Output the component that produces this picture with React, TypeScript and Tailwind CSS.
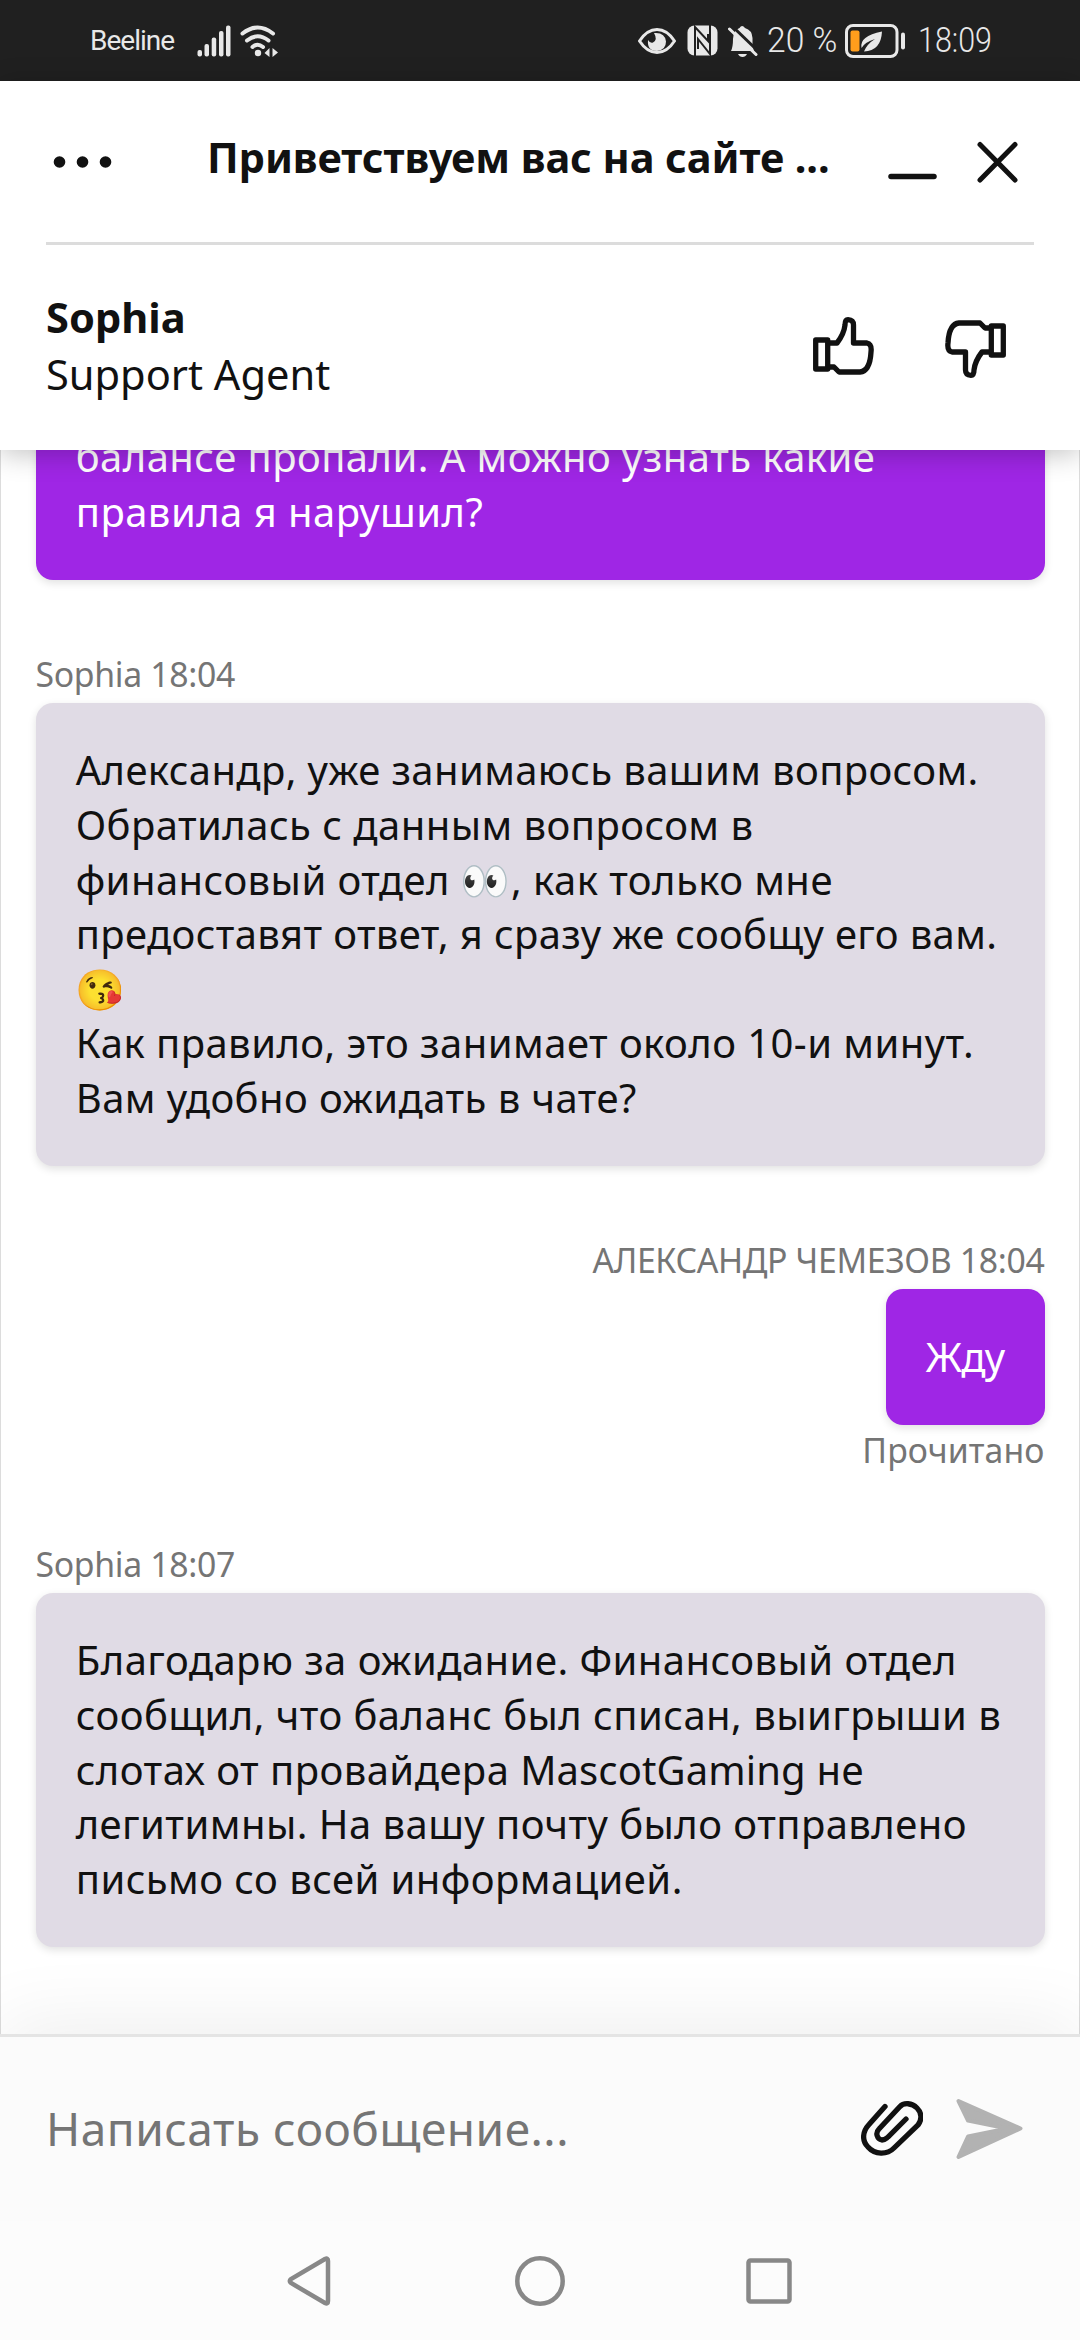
import type { ReactNode } from "react";
import clsx from "clsx";

const StatusBar = () => {
  return (
    <div className="flex h-[81px] items-center justify-between bg-[#202020] pr-[88px] pl-[90px] font-['Roboto'] font-light text-[#e8e8e8]">
      <div className="flex items-center gap-2">
        <span className="w-[99px] text-[28px] leading-[36px] font-normal tracking-[-1px] whitespace-nowrap">
          Beeline
        </span>
        <SignalIcon />
        <WifiIcon />
      </div>
      <div className="flex items-center">
        <EyeIcon />
        <NfcIcon />
        <BellOffIcon />
        <span className="w-[78px] origin-left scale-x-[0.96] text-[35px] leading-[40px] whitespace-nowrap">
          20 %
        </span>
        <BatteryIcon />
        <span className="w-[74px] origin-left scale-x-[0.87] text-[35px] leading-[40px] whitespace-nowrap">
          18:09
        </span>
      </div>
    </div>
  );
};

const ChatHeader = () => {
  return (
    <header className="relative z-10 h-[369px] bg-white px-[46px] text-[41.6px] text-[#111] shadow-[0_4px_26px_rgba(0,0,0,0.24)]">
      <div className="flex h-[164px] items-center border-b-[3px] border-[#dcdcdc]">
        <DotsIcon />
        <h1 className="mb-[9px] ml-[91px] w-[674px] shrink-0 leading-[57px] font-bold tracking-[-0.1px] whitespace-nowrap">
          Приветствуем вас на сайте ...
        </h1>
        <MinimizeIcon />
        <CloseIcon />
      </div>
      <div className="flex h-[205px] items-center justify-between pr-[28px]">
        <div className="mb-[3px] leading-[57px]">
          <p className="font-bold">Sophia</p>
          <p>Support Agent</p>
        </div>
        <div className="mb-[3px] flex items-center gap-[71px]">
          <ThumbIcon />
          <ThumbIcon className="mt-[5px] rotate-180" />
        </div>
      </div>
    </header>
  );
};

const Message = ({
  own,
  label,
  status,
  children,
}: {
  own?: boolean;
  label?: string;
  status?: string;
  children: ReactNode;
}) => {
  return (
    <div
      className={clsx(
        "flex flex-col text-[33.8px] leading-[46px] text-[#757575]",
        own ? "items-end" : "items-start",
      )}
    >
      {label && <p className="mb-[6px] tracking-[-0.34px]">{label}</p>}
      <div
        className={clsx(
          "rounded-[17px] px-[40.2px] py-[40.6px] text-[40px] leading-[54.6px] shadow-[0_3px_8px_rgba(0,0,0,0.12)]",
          own ? "bg-[#9f26e5] text-white" : "w-full bg-[#e0dbe5] text-[#111]",
        )}
      >
        {children}
      </div>
      {status && <p className="mt-[2px] tracking-[0.1px]">{status}</p>}
    </div>
  );
};

const MessageList = () => {
  return (
    <main className="flex h-[1584px] flex-col justify-end overflow-hidden border-x border-[#dcdcdc] px-[34.5px] pb-[87px]">
      <Message own>
        <p className="w-[928.6px] tracking-[0.45px]">
          балансе пропали. А можно узнать какие
          <br />
          правила я нарушил?
        </p>
      </Message>
      <div className="h-[71px] shrink-0" />
      <Message label="Sophia 18:04">
        <p className="tracking-[0.45px] whitespace-nowrap">
          <span className="tracking-[0.38px]">
            Александр, уже занимаюсь вашим вопросом.
          </span>
          <br />
          Обратилась с данным вопросом в
          <br />
          финансовый отдел 👀, как только мне
          <br />
          <span className="tracking-[0.34px]">
            предоставят ответ, я сразу же сообщу его вам.
          </span>
          <br />
          😘
          <br />
          Как правило, это занимает около 10-и минут.
          <br />
          Вам удобно ожидать в чате?
        </p>
      </Message>
      <div className="h-[71px] shrink-0" />
      <Message own label="АЛЕКСАНДР ЧЕМЕЗОВ 18:04" status="Прочитано">
        <p className="tracking-[-0.8px]">Жду</p>
      </Message>
      <div className="h-[68px] shrink-0" />
      <Message label="Sophia 18:07">
        <p className="tracking-[0.45px] whitespace-nowrap">
          Благодарю за ожидание. Финансовый отдел
          <br />
          сообщил, что баланс был списан, выигрыши в
          <br />
          слотах от провайдера <span className="tracking-[0.1px]">MascotGaming</span> не
          <br />
          легитимны. На вашу почту было отправлено
          <br />
          письмо со всей информацией.
        </p>
      </Message>
    </main>
  );
};

const Composer = () => {
  return (
    <div className="relative h-[187px] border-t-[3px] border-[#e4e4e4] bg-[#fbfbfb] shadow-[0_-10px_78px_rgba(0,0,0,0.07)]">
      <div className="flex h-[184px] items-center pr-[57px] pl-[46px]">
        <span className="mb-[3px] flex-1 text-[46px] leading-[64px] tracking-[0.5px] text-[#757575]">
          Написать сообщение...
        </span>
        <ClipIcon />
        <SendIcon />
      </div>
    </div>
  );
};

const NavBar = () => {
  return (
    <nav className="relative flex h-[119px] items-center bg-[#fcfcfc] pl-[287px] text-[#888]">
      <svg width="44" height="50" fill="none" stroke="currentColor" strokeWidth="4.5">
        <path d="M38 3 L4 23 Q1.500 25 4 27 L38 47 Q41 48.500 41 45 V5 Q41 1.500 38 3Z" />
      </svg>
      <svg width="50" height="50" fill="none" stroke="currentColor" strokeWidth="4.5" className="ml-[184px]">
        <circle cx="25" cy="25" r="22.700" />
      </svg>
      <svg width="46" height="46" fill="none" stroke="currentColor" strokeWidth="4.5" className="ml-[181px]">
        <rect x="2.500" y="2.500" width="41" height="41" rx="2" />
      </svg>
    </nav>
  );
};

const App = () => {
  return (
    <div className="h-[2340px] w-[1080px] overflow-hidden bg-white font-['Noto_Sans','Noto_Color_Emoji',sans-serif]">
      <StatusBar />
      <ChatHeader />
      <MessageList />
      <Composer />
      <NavBar />
    </div>
  );
};

export default App;

const SignalIcon = () => {
  return (
    <svg width="35" height="32" fill="currentColor">
      <rect x="0.500" y="25" width="4.500" height="6.500" rx="2" />
      <rect x="7.500" y="19" width="4.500" height="12.500" rx="2" />
      <rect x="14.700" y="12.500" width="4.500" height="19" rx="2" />
      <rect x="22" y="6" width="4.500" height="25.500" rx="2" />
      <rect x="29" y="0.500" width="4.500" height="31" rx="2" />
    </svg>
  );
};

const WifiIcon = () => {
  return (
    <svg width="40" height="32" fill="currentColor">
      <g fill="none" stroke="currentColor" strokeWidth="4" strokeLinecap="round">
        <path d="M2.500 8.500 Q17.500 -3.500 33 8.500" />
        <path d="M7 15.500 Q17.500 7 28.500 15.500" />
        <path d="M12.500 22 Q17.500 17.500 23 22" />
      </g>
      <circle cx="18" cy="28" r="3.200" />
      <path d="M24.500 28 L29.500 23 V32Z M32.500 23 L38 27.500 L32.500 32Z" />
    </svg>
  );
};

const EyeIcon = () => {
  return (
    <svg width="38" height="26" fill="none" stroke="currentColor">
      <path d="M1.500 13 Q9 1.500 19 1.500 Q29 1.500 36.500 13 Q29 24.500 19 24.500 Q9 24.500 1.500 13Z" strokeWidth="3" strokeLinejoin="round" />
      <path d="M16 5 Q20 12 15 14.500 Q12 15.500 10 12 Q9 23 19 23 Q28 22 28 13.500 Q27 4 16 5Z" fill="currentColor" stroke="none" />
    </svg>
  );
};

const NfcIcon = () => {
  return (
    <svg width="31" height="31" className="ml-[11px]">
      <rect x="0.500" y="0.500" width="30" height="30" rx="7" fill="currentColor" />
      <path d="M8 31 V2 L21 16 V9 M23 0 V29 L11 14 V24" fill="none" stroke="#202020" strokeWidth="2" />
    </svg>
  );
};

const BellOffIcon = () => {
  return (
    <svg width="31" height="32" fill="currentColor" className="mr-[8px] ml-[10px]">
      <path d="M3 26 Q5 22 5 14 Q5.500 5 11.500 3 Q14 -1 17 3 Q24 5 24.500 13 V21 L26 26Z" />
      <path d="M10 29 H19 Q17.500 32 14.500 32 Q11.500 32 10 29Z" />
      <path d="M4 1 L31 27" stroke="#202020" strokeWidth="3" />
      <path d="M1.500 4 L28 29.500" stroke="currentColor" strokeWidth="3" strokeLinecap="round" />
    </svg>
  );
};

const BatteryIcon = () => {
  return (
    <svg width="61" height="34" className="mr-[12px]">
      <rect x="1.500" y="1.500" width="50.500" height="31" rx="6.500" fill="none" stroke="currentColor" strokeWidth="3" />
      <rect x="5.500" y="6.500" width="9" height="21" rx="2" fill="#ff9d1c" />
      <path d="M16.500 24 Q14 12 37 7.500 Q36 27 19 27.500 Q22 20 30 15 Q20 18 16.500 24Z" fill="currentColor" />
      <rect x="56" y="8.500" width="4" height="17" rx="2" fill="currentColor" />
    </svg>
  );
};

const DotsIcon = () => {
  return (
    <svg width="70" height="14" fill="currentColor" className="shrink-0">
      <circle cx="13.500" cy="7" r="5.800" />
      <circle cx="36.500" cy="7" r="5.800" />
      <circle cx="59.500" cy="7" r="5.800" />
    </svg>
  );
};

const MinimizeIcon = () => {
  return (
    <svg width="60" height="48" stroke="currentColor" className="shrink-0">
      <path d="M10 38.500 H53" strokeWidth="5.500" strokeLinecap="round" />
    </svg>
  );
};

const CloseIcon = () => {
  return (
    <svg width="53" height="48" stroke="currentColor" strokeWidth="5" strokeLinecap="round" className="ml-[30px] shrink-0">
      <path d="M9 6.500 L44 42 M44 6.500 L9 42" />
    </svg>
  );
};

const ThumbIcon = ({ className }: { className?: string }) => {
  return (
    <svg
      width="61"
      height="58"
      fill="none"
      stroke="currentColor"
      strokeWidth="5.3"
      strokeLinejoin="round"
      className={className}
    >
      <path d="M2.700 23 H14.700 V52 H2.700Z" />
      <path d="M17 26 H24 Q31 17 32 8 Q32 2.700 35 2.700 Q40.500 3 40.500 8 V26 H54 Q59 27 58 35 Q57 54 47 55 H26 L21 50 H17" />
    </svg>
  );
};

const ClipIcon = () => {
  return (
    <svg width="62" height="56" fill="none" stroke="currentColor" strokeWidth="5.3" strokeLinecap="round" className="text-[#111]">
      <path d="M24 5.500 L8 23.500 C1 31 1 40 7 46 C14 54 26 54 33 47 L57 24 C61 19 61 12 56 7 C51 2 43 1 38.500 6 L18 28 C14 32 16 38 21 39 C24 39 25 37.500 27 36 L45 18" />
    </svg>
  );
};

const SendIcon = () => {
  return (
    <svg
      width="67"
      height="62"
      fill="#b2b2b2"
      stroke="#b2b2b2"
      strokeWidth="4"
      strokeLinejoin="round"
      className="ml-[33px]"
    >
      <path d="M2.500 3 L64.500 30.500 L2.500 59 L12 38.500 L44 32 V29 L12 22.500Z" />
    </svg>
  );
};
